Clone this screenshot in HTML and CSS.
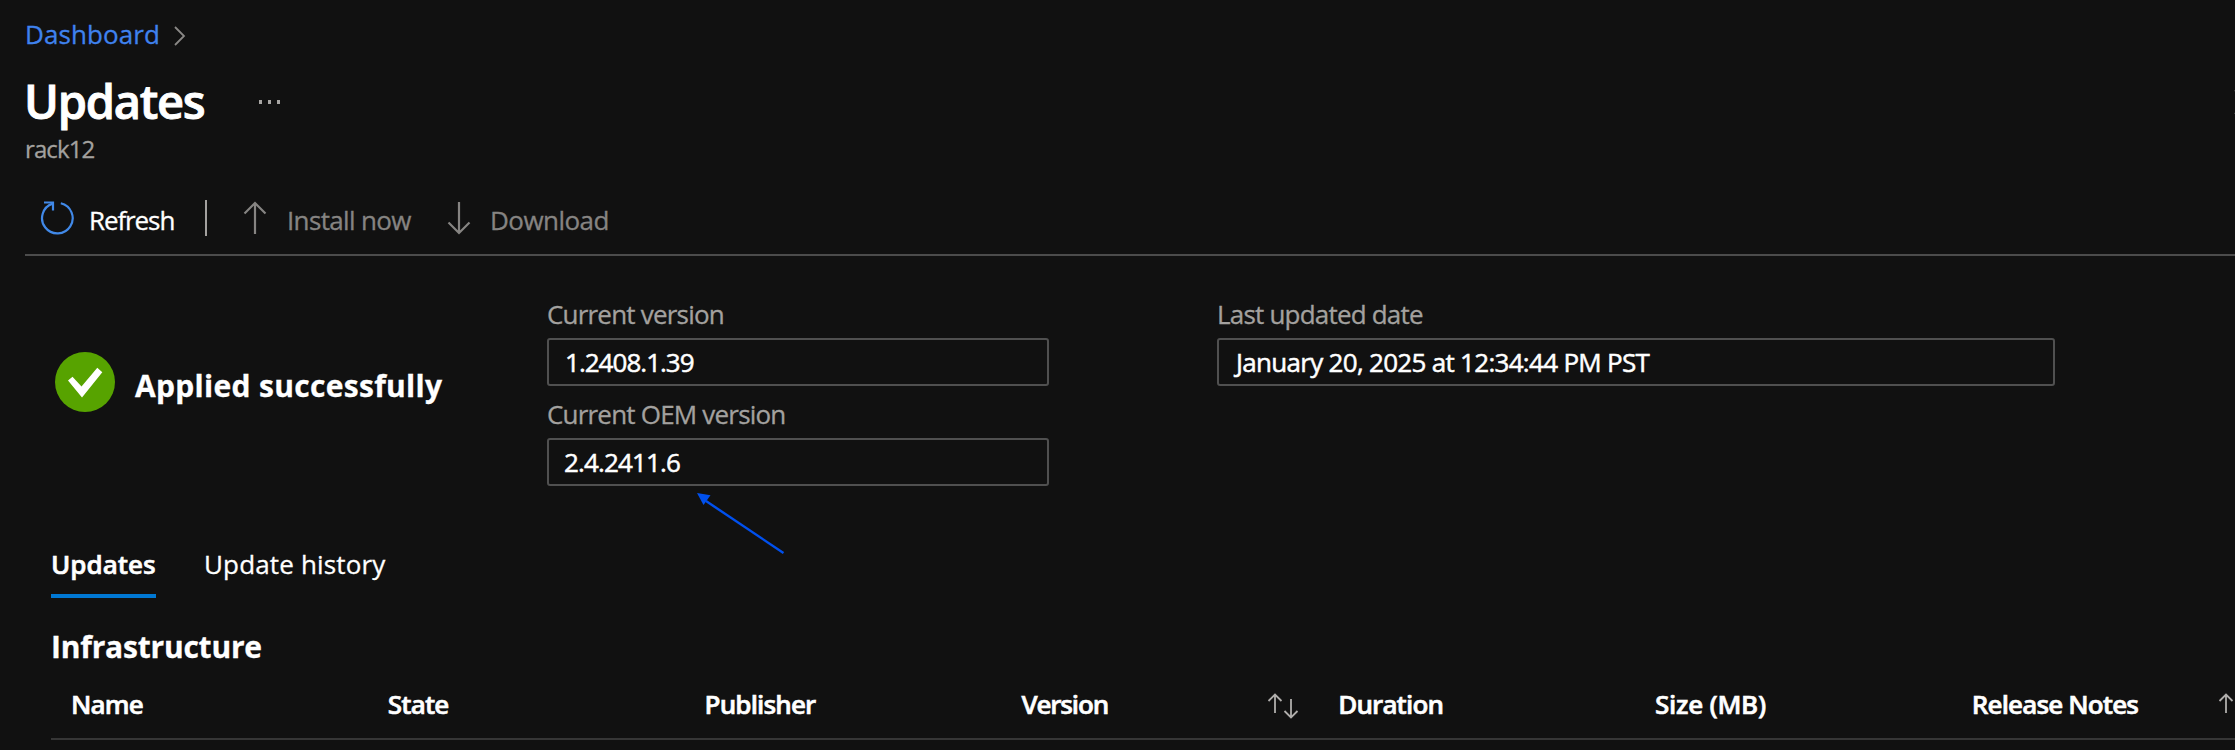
FILE: index.html
```html
<!DOCTYPE html>
<html lang="en">
<head>
<meta charset="utf-8">
<title>Updates</title>
<link rel="stylesheet" href="styles.css">
</head>
<body>
<div class="page">
  <header class="header">
    <nav class="breadcrumb">
      <a class="breadcrumb-link">Dashboard</a>
      <svg class="chevron" width="14" height="22" viewBox="0 0 14 22"><path d="M2 2l9 9-9 9"/></svg>
    </nav>
    <div class="title-row">
      <h1 class="title">Updates</h1>
      <svg class="more" width="24" height="6" viewBox="0 0 24 6"><path d="M1 1h3v4H1zM10 1h3v4h-3zM19 1h3v4h-3z"/></svg>
      <svg class="close" width="26" height="26" viewBox="0 0 26 26"><path d="M1 1l24 24M1 25L25 1"/></svg>
    </div>
    <div class="subtitle">rack12</div>
  </header>

  <div class="toolbar">
    <svg class="icon refresh-icon" width="34" height="36" viewBox="0 0 34 36"><path d="M20.800 3.200A15.300 15.300 0 1 1 12.500 3.600"/><path d="M4 2.500h9v8"/></svg>
    <span class="tool tool-refresh">Refresh</span>
    <span class="separator"></span>
    <svg class="icon install-icon" width="24" height="34" viewBox="0 0 24 34"><path d="M12 33V2M1.500 12.500L12 2l10.500 10.500"/></svg>
    <span class="tool tool-install">Install now</span>
    <svg class="icon download-icon" width="24" height="34" viewBox="0 0 24 34"><path d="M12 1v31M1.500 21.500L12 32l10.500-10.500"/></svg>
    <span class="tool tool-download">Download</span>
  </div>

  <section class="summary">
    <div class="status">
      <svg width="60" height="60" viewBox="0 0 60 60"><circle cx="30" cy="30" r="30" fill="#57a300"/><path fill="#fff" d="M13 28.500l4.500-3.800 9 9.700 15.800-18.700 5 4.600L27 45.500z"/></svg>
      <span class="status-text">Applied successfully</span>
    </div>
    <div class="versions">
      <div class="field">
        <label class="label">Current version</label>
        <div class="value value-version">1.2408.1.39</div>
      </div>
      <div class="field">
        <label class="label">Current OEM version</label>
        <div class="value value-oem">2.4.2411.6</div>
      </div>
      <svg class="pointer" width="90" height="64" viewBox="0 0 90 64"><path class="pointer-line" d="M9 8L86.500 60"/><path class="pointer-head" d="M0 0l13.500 2.300L6.500 12z"/></svg>
    </div>
    <div class="field">
      <label class="label">Last updated date</label>
      <div class="value value-date">January 20, 2025 at 12:34:44 PM PST</div>
    </div>
  </section>

  <nav class="tabs">
    <span class="tab tab-active">Updates</span>
    <span class="tab">Update history</span>
  </nav>

  <section class="infra">
    <h2 class="section-title">Infrastructure</h2>
    <div class="table-head">
      <div class="col">Name</div>
      <div class="col">State</div>
      <div class="col">Publisher</div>
      <div class="col col-version">Version
        <svg class="sort" width="34" height="26" viewBox="0 0 34 26"><path d="M8 20V1.500M1.500 8L8 1.500 14.500 8M24 6v18.500M17.500 18l6.500 6.500 6.500-6.500"/></svg>
      </div>
      <div class="col">Duration</div>
      <div class="col col-size">Size (MB)</div>
      <div class="col">Release Notes
        <svg class="sort" width="34" height="26" viewBox="0 0 34 26"><path d="M8 20V1.500M1.500 8L8 1.500 14.500 8M24 6v18.500M17.500 18l6.500 6.500 6.500-6.500"/></svg>
      </div>
    </div>
  </section>
</div>
</body>
</html>
```
FILE: styles.css
```css
* { box-sizing: border-box; }

body {
  margin: 0;
  background: #111;
  color: #fff;
  font: 26px/36px "Open Sans", "Noto Sans", sans-serif;
  -webkit-text-stroke: 0.3px currentColor;
  overflow: hidden;
}

svg { flex: none; }

.page {
  width: 2235px;
  height: 750px;
  overflow: hidden;
}

.header { padding: 16px 0 0 25px; }

.breadcrumb {
  display: flex;
  align-items: center;
  gap: 13px;
  height: 36px;
}

.breadcrumb-link {
  color: #3f82ee;
  letter-spacing: 0.1px;
}

.chevron { margin-top: 3px; }

.chevron path {
  fill: none;
  stroke: #8a8886;
  stroke-width: 1.800;
}

.title-row {
  display: flex;
  align-items: center;
  height: 64px;
  margin-top: 15px;
}

.title {
  width: 232px;
  margin: 3px 0 0 -1px;
  font-size: 47px;
  line-height: 64px;
  font-weight: 600;
  letter-spacing: -1.250px;
  -webkit-text-stroke-width: 0.9px;
}

.more {
  margin-top: 6px;
  margin-left: 2px;
  fill: #a8a6a4;
}

.close { margin: 6px -25px 0 auto; }

.close path {
  fill: none;
  stroke: #777;
  stroke-width: 2;
}

.subtitle {
  margin-top: 2px;
  font-size: 24px;
  line-height: 32px;
  color: #a3a19f;
  letter-spacing: -0.89px;
}

.toolbar {
  display: flex;
  align-items: center;
  height: 91px;
  margin-left: 25px;
  padding: 17px 0 0 15px;
  border-bottom: 2.500px solid #4c4c4c;
}

.tool {
  padding-top: 4px;
  white-space: nowrap;
}

.tool-refresh {
  width: 116px;
  margin-left: 15px;
  letter-spacing: -1.100px;
}

.tool-install {
  width: 160px;
  margin-left: 20px;
  color: #868482;
  letter-spacing: -0.65px;
}

.tool-download {
  margin-left: 19px;
  color: #868482;
  letter-spacing: -0.55px;
}

.icon path {
  fill: none;
  stroke: #868482;
  stroke-width: 2.200;
}

.refresh-icon path { stroke: #4189e8; }

.separator {
  width: 2px;
  height: 36px;
  margin-right: 36px;
  background: #a3a19f;
}

.summary {
  display: grid;
  grid-template-columns: 492px 502px 838px;
  column-gap: 0;
  height: 202px;
  margin-top: 40px;
  padding-left: 55px;
}

.summary > .field { margin-left: 168px; width: 838px; }

.status {
  display: flex;
  align-items: center;
  gap: 20px;
  height: 60px;
  margin-top: 56px;
}

.status-text {
  padding-top: 7px;
  font-size: 30px;
  line-height: 40px;
  font-weight: 700;
  letter-spacing: 0.31px;
}

.versions {
  position: relative;
  display: flex;
  flex-direction: column;
  gap: 10px;
}

.label {
  display: block;
  margin-bottom: 6px;
  color: #a3a19f;
  letter-spacing: -0.8px;
}

.value {
  height: 48px;
  padding: 4px 16px;
  border: 2px solid #505050;
  border-radius: 3px;
  -webkit-text-stroke-width: 0.5px;
}

.value-version { letter-spacing: -0.98px; }

.value-oem {
  padding-left: 15px;
  letter-spacing: -0.85px;
}

.value-date {
  padding-left: 17px;
  letter-spacing: -0.7px;
}

.pointer {
  position: absolute;
  left: 150px;
  top: 197px;
}

.pointer-line {
  fill: none;
  stroke: #0050ee;
  stroke-width: 2.400;
}

.pointer-head { fill: #0050ee; }

.tabs {
  display: flex;
  gap: 48px;
  margin-top: 48px;
  padding-left: 51px;
}

.tab {
  height: 52px;
  letter-spacing: 0.16px;
}

.tab-active {
  width: 105px;
  border-bottom: 4px solid #0078d4;
  font-weight: 600;
  -webkit-text-stroke-width: 0.6px;
  letter-spacing: 0;
}

.infra { margin: 29px 0 0 51px; }

.section-title {
  margin: 0;
  font-size: 30px;
  line-height: 40px;
  font-weight: 700;
  letter-spacing: -0.21px;
}

.table-head {
  display: flex;
  height: 73px;
  padding: 19px 0 0 20px;
  border-bottom: 2px solid #363636;
}

.col {
  display: flex;
  flex: none;
  width: 316.800px;
  justify-content: space-between;
  font-weight: 600;
  letter-spacing: -0.86px;
  -webkit-text-stroke-width: 0.6px;
}

.col-version { letter-spacing: -1.150px; }

.col-size { letter-spacing: -0.26px; }

.sort {
  margin: 7px 37px 0 0;
}

.sort path {
  fill: none;
  stroke: #b0aeac;
  stroke-width: 1.800;
}
```
